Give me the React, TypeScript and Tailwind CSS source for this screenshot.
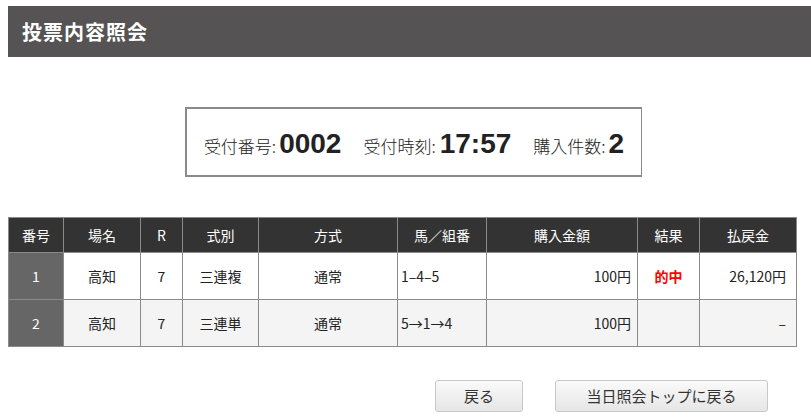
import React from "react";

const jp = { fontFamily: '"Noto Sans CJK JP", "Noto Sans", sans-serif' };
const num = { fontFamily: '"Liberation Sans", Arial, sans-serif' };

type Row = {
  no: string;
  place: string;
  race: string;
  kind: string;
  method: string;
  combo: string;
  amount: string;
  result: string;
  payout: string;
};

const rows: Row[] = [
  { no: "1", place: "高知", race: "7", kind: "三連複", method: "通常", combo: "1‒4‒5", amount: "100円", result: "的中", payout: "26,120円" },
  { no: "2", place: "高知", race: "7", kind: "三連単", method: "通常", combo: "5→1→4", amount: "100円", result: "", payout: "‒" },
];

const heads = ["番号", "場名", "R", "式別", "方式", "馬／組番", "購入金額", "結果", "払戻金"];
const widths = [55, 77, 42, 76, 139, 89, 151, 62, 97];

export default function App() {
  return (
    <div className="w-[811px] h-[420px] bg-white overflow-hidden pt-[6px] pl-2 text-[#222]" style={jp}>
      <div className="h-[51px] bg-[#555353] flex items-center pl-[14px]">
        <h1 className="text-white font-bold text-[20px] tracking-[1px]">投票内容照会</h1>
      </div>

      <div className="mt-[50px] ml-[177px] w-[457px] h-[70px] border-[2px] border-[#8a8a8a] border-r-[1px] border-b-[2px] flex items-center justify-center gap-[22px] pt-[4px]">
        <div className="flex items-baseline">
          <span className="text-[17px] font-light">受付番号:</span>
          <span className="text-[28px] font-bold ml-[3px]" style={num}>0002</span>
        </div>
        <div className="flex items-baseline">
          <span className="text-[17px] font-light">受付時刻:</span>
          <span className="text-[28px] font-bold ml-[4px]" style={num}>17:57</span>
        </div>
        <div className="flex items-baseline">
          <span className="text-[17px] font-light">購入件数:</span>
          <span className="text-[28px] font-bold ml-[3px]" style={num}>2</span>
        </div>
      </div>

      <table className="mt-[40px] w-[788px] table-fixed border-collapse border border-[#8a8a8a] text-[14px]">
        <colgroup>
          {widths.map((w, i) => (
            <col key={i} style={{ width: w }} />
          ))}
        </colgroup>
        <thead>
          <tr className="h-[35px] bg-[#333333] text-white">
            {heads.map((h) => (
              <th key={h} className="border border-[#8a8a8a] font-normal text-center">
                {h}
              </th>
            ))}
          </tr>
        </thead>
        <tbody>
          {rows.map((r, i) => (
            <tr key={r.no} className={`h-[47px] ${i === 0 ? "bg-white" : "bg-[#f4f4f4]"}`}>
              <td className="border border-[#8a8a8a] bg-[#666666] text-white text-center">{r.no}</td>
              <td className="border border-[#8a8a8a] text-center">{r.place}</td>
              <td className="border border-[#8a8a8a] text-center">{r.race}</td>
              <td className="border border-[#8a8a8a] text-center">{r.kind}</td>
              <td className="border border-[#8a8a8a] text-center">{r.method}</td>
              <td className="border border-[#8a8a8a] text-left pl-[3px]">{r.combo}</td>
              <td className="border border-[#8a8a8a] text-right pr-[6px]">{r.amount}</td>
              <td className="border border-[#8a8a8a] text-center font-bold text-[#ff0000]">{r.result}</td>
              <td className="border border-[#8a8a8a] text-right pr-[10px]">{r.payout}</td>
            </tr>
          ))}
        </tbody>
      </table>

      <div className="mt-[33px] ml-[427px] flex gap-[32px]">
        <button className="w-[88px] h-[32px] rounded-[3px] border border-[#c8c8c8] bg-gradient-to-b from-[#fafafa] to-[#e6e6e6] text-[15px] text-[#333]">
          戻る
        </button>
        <button className="w-[213px] h-[32px] rounded-[3px] border border-[#c8c8c8] bg-gradient-to-b from-[#fafafa] to-[#e6e6e6] text-[15px] text-[#333]">
          当日照会トップに戻る
        </button>
      </div>
    </div>
  );
}
